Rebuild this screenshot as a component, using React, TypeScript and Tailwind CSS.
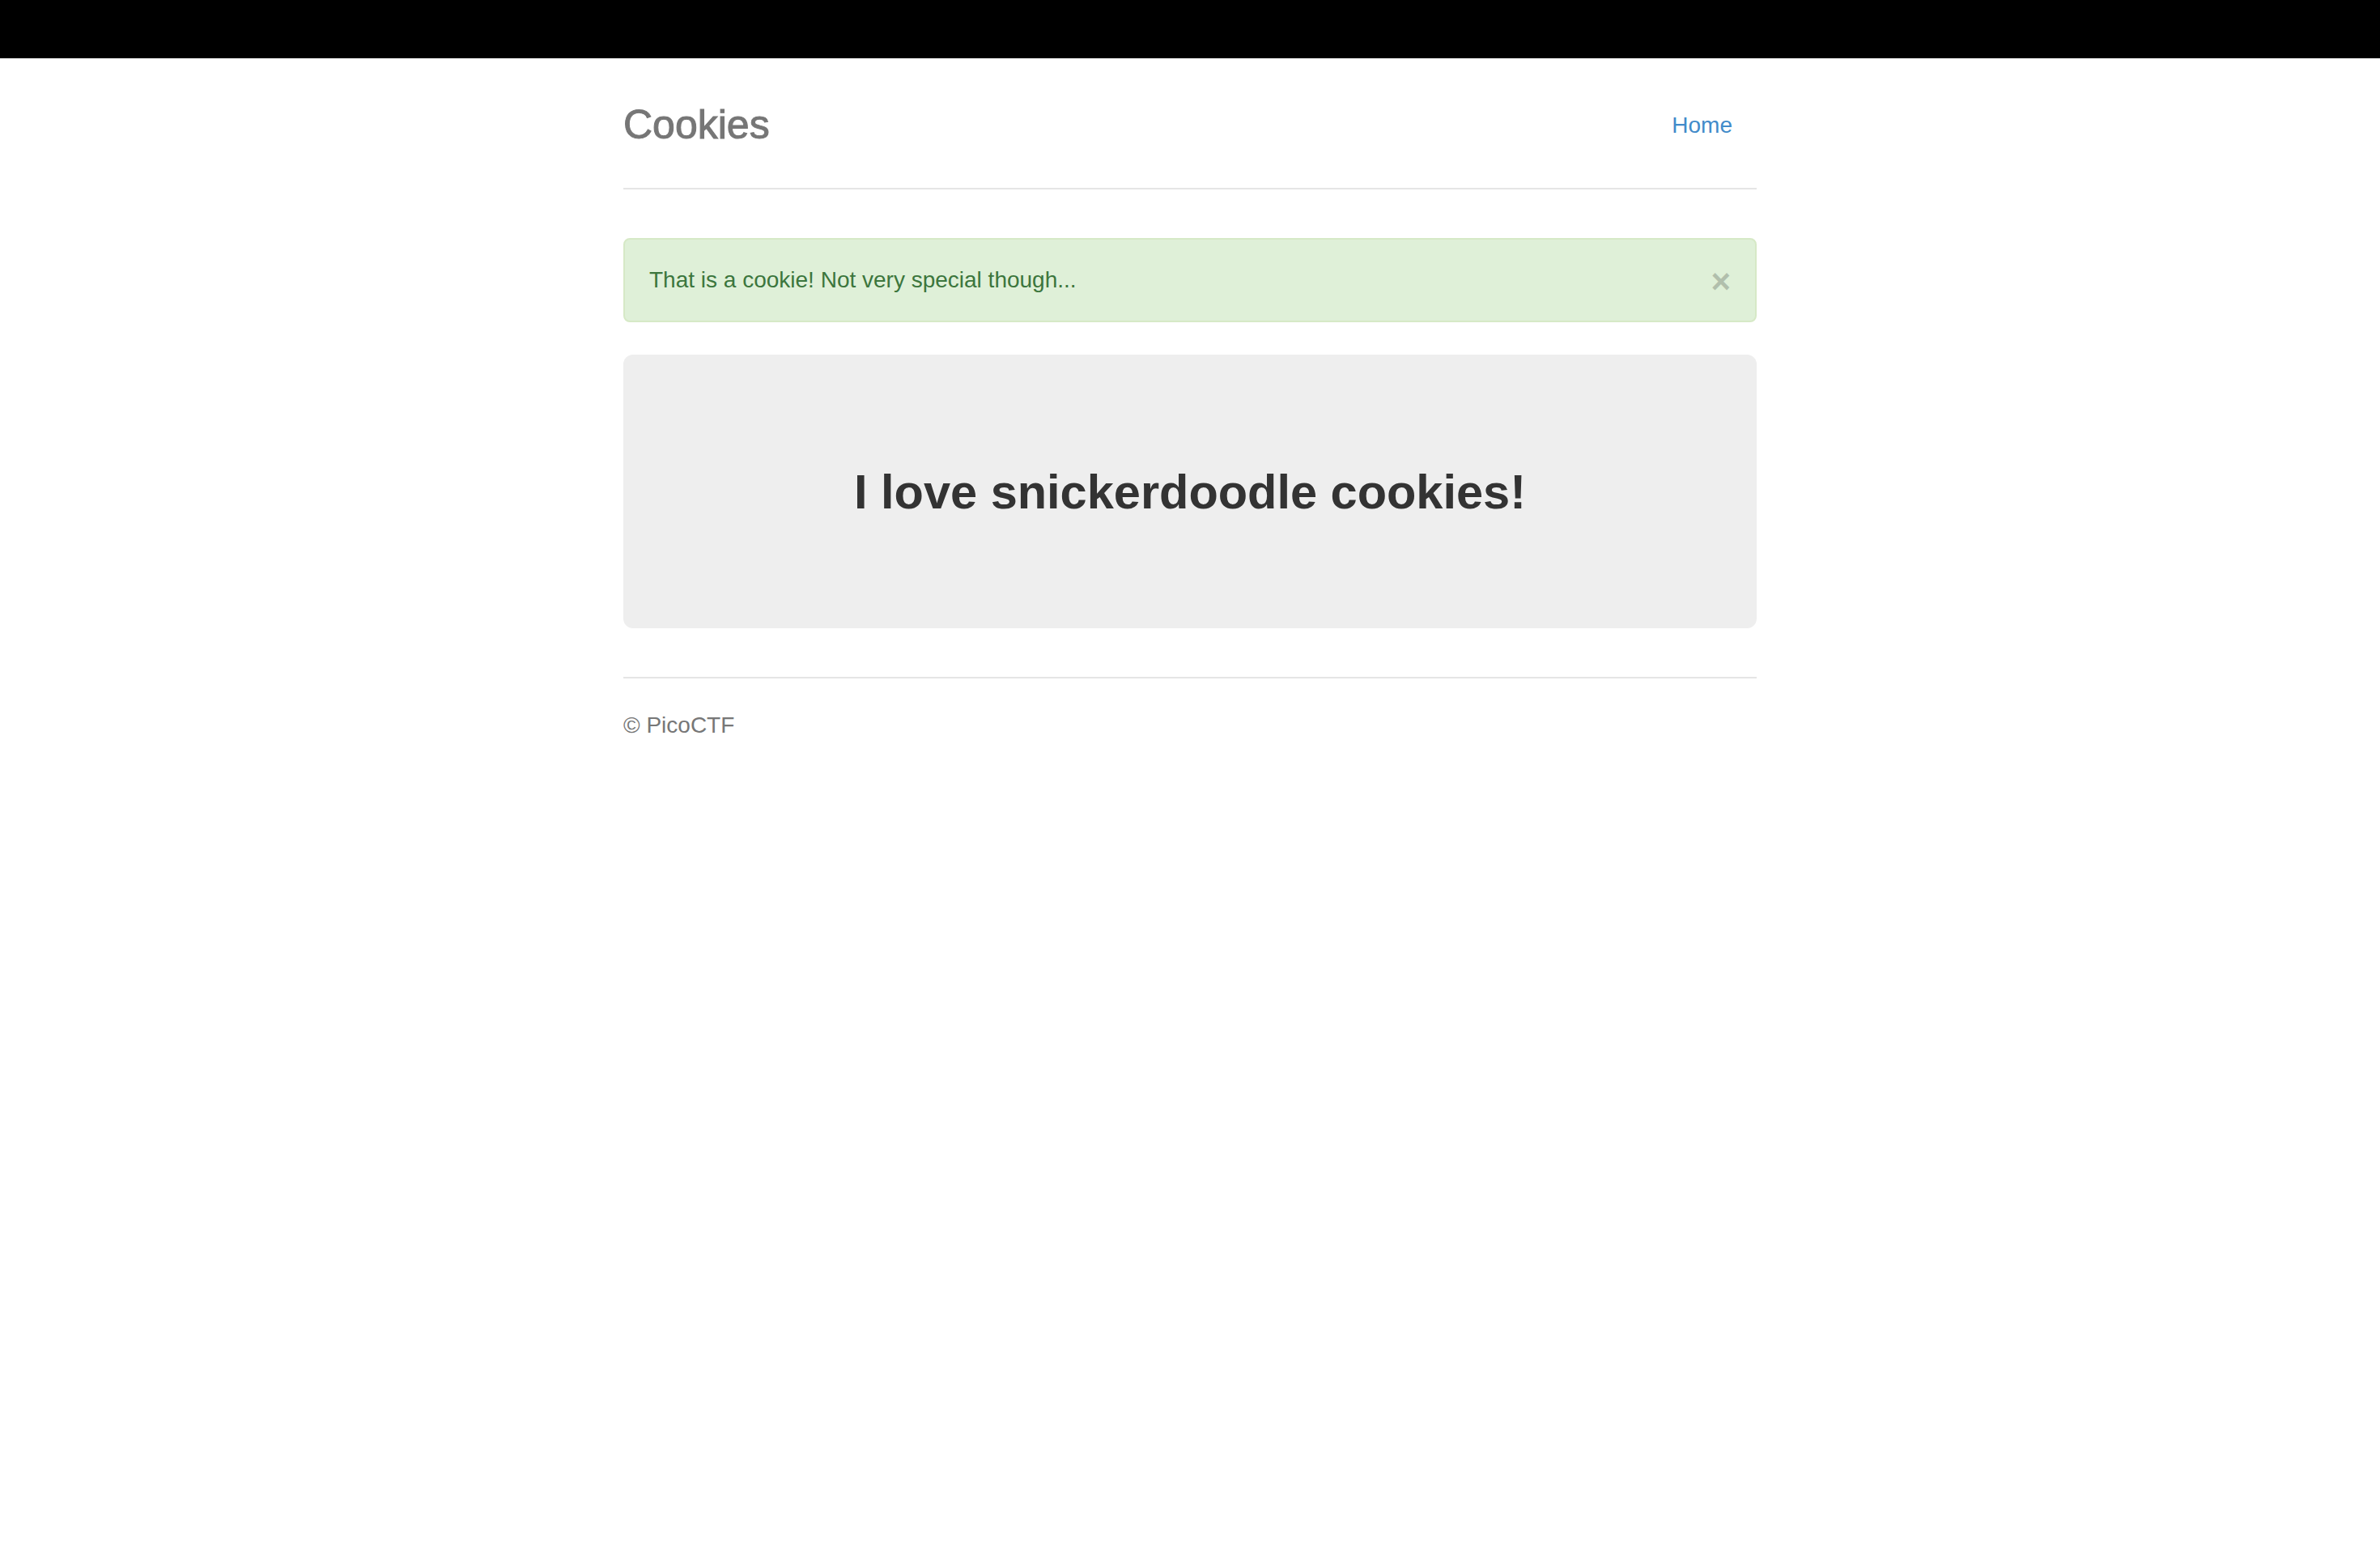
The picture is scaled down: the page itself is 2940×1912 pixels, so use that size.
export default function App() {
  return (
    <div className="min-h-screen bg-white font-['Liberation_Sans',Arial,Helvetica,sans-serif]">
      <div className="h-[72px] bg-black" />
      <div className="mx-auto w-[1400px] pt-[40px]">
        <header className="flex items-center justify-between border-b-2 border-[#e5e5e5] pb-[40px]">
          <h3 className="pt-[4px] text-[50px] font-normal leading-[76px] text-[#767676] [-webkit-text-stroke:1px_#767676]">
            Cookies
          </h3>
          <nav>
            <a href="#" className="block px-[30px] pb-[17px] pt-[23px] text-[28px] leading-[40px] text-[#428bca]">
              Home
            </a>
          </nav>
        </header>

        <div className="mt-[60px] flex h-[104px] items-center justify-between rounded-[8px] border-2 border-[#d6e9c6] bg-[#dff0d8] px-[30px] text-[28px] leading-[40px] text-[#3c763d]">
          <span>That is a cookie! Not very special though...</span>
          <span className="pt-[4px] text-[42px] font-bold leading-none text-black opacity-20">×</span>
        </div>

        <div className="mt-[40px] flex h-[338px] items-center justify-center rounded-[12px] bg-[#eeeeee] pt-[2px]">
          <h2 className="text-[59.5px] font-bold leading-[66px] text-[#333333]">I love snickerdoodle cookies!</h2>
        </div>

        <footer className="mt-[60px] border-t-2 border-[#e5e5e5] pt-[38px] text-[28px] leading-[40px] text-[#777777]">
          © PicoCTF
        </footer>
      </div>
    </div>
  );
}
